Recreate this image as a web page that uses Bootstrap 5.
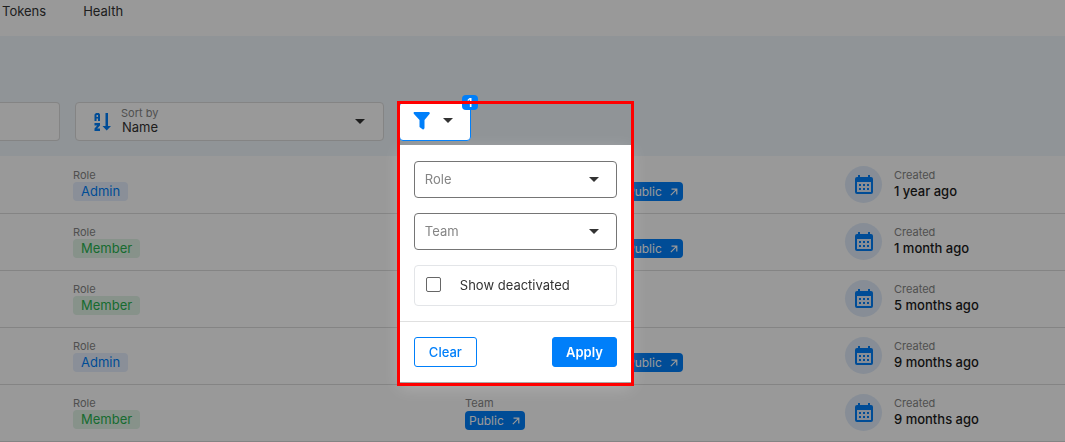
<!DOCTYPE html>
<html lang="en">
<head>
<meta charset="utf-8">
<meta name="viewport" content="width=device-width, initial-scale=1">
<title>Users</title>
<link href="https://cdn.jsdelivr.net/npm/bootstrap@5.3.0/dist/css/bootstrap.min.css" rel="stylesheet">
<style>
:root{--accent:#007ffa;--ink:#333;--muted:#858585;--line:#dcdcdc}
body{font-family:Inter,"Liberation Sans",sans-serif;font-size:13px;line-height:16px;color:var(--ink);background:#fff}
.tabs-bar{height:36px;gap:37px;padding:3px 2px}
.tabs-bar a{color:var(--ink);text-decoration:none}
.tool-area{background:#f0f7fc;height:120px;padding-top:66px;gap:15px}
.field-box{background:#fff;border:1px solid var(--line);border-radius:4px;height:39px}
.search-box{width:60px;border-left:0;border-radius:0 4px 4px 0}
.sort-box{width:29%;padding-left:18px;gap:10px}
.caret-select{appearance:none;border:0;background:transparent url("data:image/svg+xml,%3Csvg xmlns='http://www.w3.org/2000/svg' viewBox='0 0 10 5'%3E%3Cpath fill='%23333' d='M0 0h10L5 5z'/%3E%3C/svg%3E") no-repeat right 17px center/10px 5px;color:var(--ink);outline-offset:-1px}
.sort-box .caption{font-size:11px;line-height:12px;color:var(--muted)}
.sort-box .caret-select{position:absolute;inset:0;width:100%;padding:11px 36px 0 46px;background-position:right 18px top 16px}
.filter-wrap{z-index:20}
.filter-btn{width:72px;height:39px;background:#fff;border:1px solid var(--accent);border-radius:4px;gap:12px;padding:0 0 2px 13px}
.count-badge{position:absolute;left:63px;top:-7px;width:16px;height:15px;border-radius:4px;background:var(--accent);color:#fff;font-size:12px;line-height:15px;font-weight:600;text-align:center}
.filter-panel{position:absolute;left:1px;top:43px;width:231px;background:#fff;box-shadow:0 5px 16px rgba(255,255,255,.25)}
.filter-panel .fields{padding:16px 14px 15px;gap:15px}
.filter-panel .caret-select{height:37px;border:1px solid #757575;border-radius:4px;padding:0 10px 1px;color:var(--muted)}
.check-box{border:1px solid #e3e5e8;border-radius:4px;height:41px;padding:0 0 2px 11px;gap:19px}
.check-box input{appearance:none;width:15px;height:15px;border:1px solid #666;border-radius:2px;margin:0}
.check-box input:checked{background:var(--accent)}
.filter-panel .actions{border-top:1px solid #e0e0e0;padding:15px 14px}
.act{height:30px;border:1px solid var(--accent);border-radius:3px;padding:0 14px 1px;font-size:13px}
.act-clear{background:#fff;color:var(--accent);font-weight:500}
.act-apply{background:var(--accent);color:#fff;font-weight:600;padding:0 13px 1px}
.marker-frame{position:absolute;left:-2px;top:-1px;width:237px;height:285px;border:3px solid #f00;pointer-events:none}
.people{padding-top:1px}
.person{display:grid;grid-template-columns:392fr 380fr 220fr;align-items:center;height:57px;padding:0 0 1px 73px;border-bottom:1px solid var(--line)}
.caption{font-size:11px;line-height:14px;color:var(--muted)}
.chip{display:inline-block;height:19px;line-height:19px;padding:0 8px;border-radius:4px}
.chip-admin{background:#e6effd;color:var(--accent)}
.chip-member{background:#e1f3e6;color:#28b351}
.chip-team{background:var(--accent);color:#fff;font-size:12px;line-height:18px;padding:0 5px 0 4px;text-decoration:none}
.team-end{padding-left:158px;padding-top:14px}
.team-first .caption{line-height:16px}
.date-dot{width:37px;height:37px;border-radius:50%;background:#e1ecfa}
.when{font-weight:500;color:#1c1c1c;line-height:19px}
.dimmer{position:fixed;inset:0;background:rgba(0,0,0,.4);z-index:10}
svg{display:block;flex:none}
</style>
</head>
<body>
<svg width="0" height="0" class="position-absolute" aria-hidden="true">
  <symbol id="cal" viewBox="0 0 18 19"><path fill="#007ffa" fill-rule="evenodd" d="M3 0h2v2h8V0h2v2h1q2 0 2 2v13q0 2-2 2H2q-2 0-2-2V4q0-2 2-2h1zM2 7v10h14V7zm2 2h2v2H4zm4 0h2v2H8zm4 0h2v2h-2zM4 13h2v2H4zm4 0h2v2H8zm4 0h2v2h-2z"/></symbol>
  <symbol id="out" viewBox="0 0 8 8"><path fill="none" stroke="#fff" stroke-width="1.2" d="M.8 7.2 6.8 1.2M1.5 1.2h5.3v5.3"/></symbol>
</svg>

<nav class="tabs-bar d-flex">
  <a href="#tokens">Tokens</a>
  <a href="#health">Health</a>
</nav>

<section class="tool-area d-flex align-items-start">
  <input class="field-box search-box" type="text" aria-label="Search">
  <div class="field-box sort-box d-flex align-items-center position-relative">
    <svg width="17" height="18" viewBox="0 0 17 18" aria-hidden="true"><path fill="#007ffa" fill-rule="evenodd" d="M2 0h3l1 1.500V8H4V5.500H2.500V8H.5V1.500zM2.500 2v2H4V2zM.5 10H6v2.500L3.200 15.500H6V18H.5v-2.500L3.200 12.500H.5zM11.500 0h2.500v13H17l-4.300 4.500L8.500 13h3z"/></svg>
    <label class="caption align-self-start pt-1" for="sort">Sort by</label>
    <select id="sort" class="caret-select"><option>Name</option></select>
  </div>
  <div class="filter-wrap position-relative">
    <button class="filter-btn d-flex align-items-center" type="button" aria-label="Filter">
      <svg width="18" height="18" viewBox="0 0 18 18" aria-hidden="true"><path fill="#007ffa" d="M1 0h15q1.500 1 .5 2l-5 6v8q-.5 2-2 1.200L6.500 15V8L1 2Q0 1 1 0z"/></svg>
      <svg width="10" height="5" viewBox="0 0 10 5" aria-hidden="true"><path fill="#333" d="M0 0h10L5 5z"/></svg>
    </button>
    <span class="count-badge">1</span>
    <form class="filter-panel">
      <div class="fields d-flex flex-column">
        <select class="caret-select" aria-label="Role"><option>Role</option></select>
        <select class="caret-select" aria-label="Team"><option>Team</option></select>
        <label class="check-box d-flex align-items-center"><input type="checkbox">Show deactivated</label>
      </div>
      <div class="actions d-flex justify-content-between">
        <button class="act act-clear" type="reset">Clear</button>
        <button class="act act-apply" type="button">Apply</button>
      </div>
    </form>
    <div class="marker-frame"></div>
  </div>
</section>

<main class="people">
  <div class="person">
    <div><div class="caption">Role</div><span class="chip chip-admin">Admin</span></div>
    <div class="team-end"><a href="#public" class="chip chip-team d-inline-flex align-items-center gap-2">Public <svg width="8" height="8"><use href="#out"/></svg></a></div>
    <div class="d-flex align-items-center gap-2"><span class="date-dot d-flex align-items-center justify-content-center"><svg width="18" height="19"><use href="#cal"/></svg></span><div class="ps-1"><div class="caption">Created</div><div class="when">1 year ago</div></div></div>
  </div>
  <div class="person">
    <div><div class="caption">Role</div><span class="chip chip-member">Member</span></div>
    <div class="team-end"><a href="#public" class="chip chip-team d-inline-flex align-items-center gap-2">Public <svg width="8" height="8"><use href="#out"/></svg></a></div>
    <div class="d-flex align-items-center gap-2"><span class="date-dot d-flex align-items-center justify-content-center"><svg width="18" height="19"><use href="#cal"/></svg></span><div class="ps-1"><div class="caption">Created</div><div class="when">1 month ago</div></div></div>
  </div>
  <div class="person">
    <div><div class="caption">Role</div><span class="chip chip-member">Member</span></div>
    <div></div>
    <div class="d-flex align-items-center gap-2"><span class="date-dot d-flex align-items-center justify-content-center"><svg width="18" height="19"><use href="#cal"/></svg></span><div class="ps-1"><div class="caption">Created</div><div class="when">5 months ago</div></div></div>
  </div>
  <div class="person">
    <div><div class="caption">Role</div><span class="chip chip-admin">Admin</span></div>
    <div class="team-end"><a href="#public" class="chip chip-team d-inline-flex align-items-center gap-2">Public <svg width="8" height="8"><use href="#out"/></svg></a></div>
    <div class="d-flex align-items-center gap-2"><span class="date-dot d-flex align-items-center justify-content-center"><svg width="18" height="19"><use href="#cal"/></svg></span><div class="ps-1"><div class="caption">Created</div><div class="when">9 months ago</div></div></div>
  </div>
  <div class="person">
    <div><div class="caption">Role</div><span class="chip chip-member">Member</span></div>
    <div class="team-first"><div class="caption">Team</div><a href="#public" class="chip chip-team d-inline-flex align-items-center gap-2">Public <svg width="8" height="8"><use href="#out"/></svg></a></div>
    <div class="d-flex align-items-center gap-2"><span class="date-dot d-flex align-items-center justify-content-center"><svg width="18" height="19"><use href="#cal"/></svg></span><div class="ps-1"><div class="caption">Created</div><div class="when">9 months ago</div></div></div>
  </div>
</main>
<div class="dimmer"></div>
<script src="https://cdn.jsdelivr.net/npm/bootstrap@5.3.0/dist/js/bootstrap.bundle.min.js"></script>
</body>
</html>
